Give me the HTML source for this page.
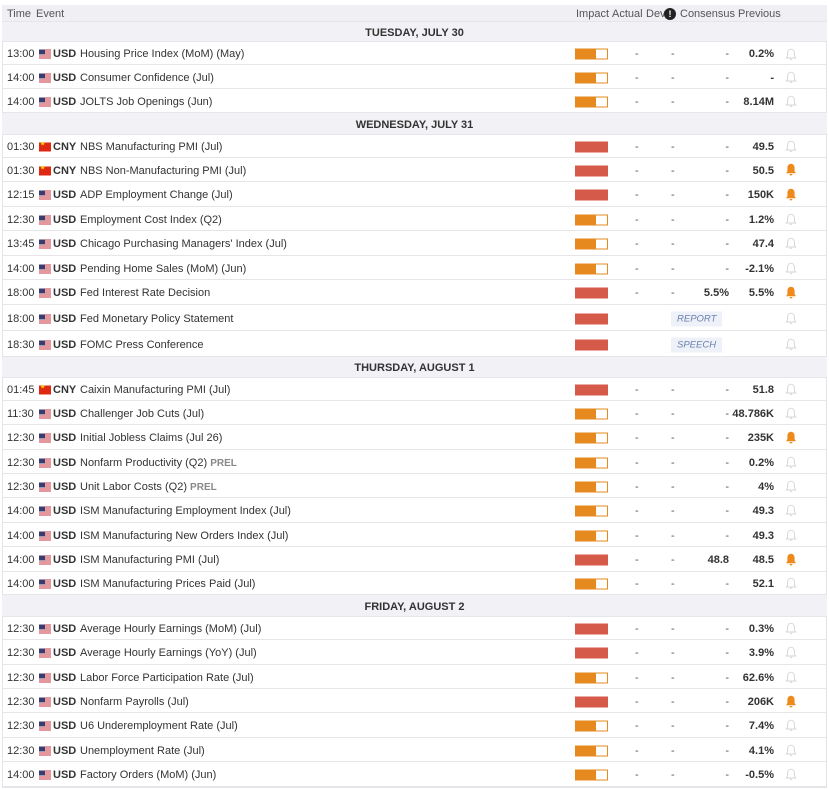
<!DOCTYPE html>
<html><head><meta charset="utf-8"><style>
*{margin:0;padding:0;box-sizing:border-box}
body{width:829px;height:789px;background:#fff;font-family:"Liberation Sans",Arial,sans-serif;font-size:11px;color:#333;position:relative;overflow:hidden}
.t{position:absolute;left:2px;top:5px;width:825px;height:783px;border:1px solid #e4e4e8;border-top:none}
.r{position:absolute;left:2px;width:825px;border-bottom:1px solid #e6e6ea;display:block}
.r>span{position:absolute;top:50%;transform:translateY(-50%);white-space:nowrap;margin-top:1px}
.h{background:#f0f0f4;color:#555}
.d{background:#f2f2f6;font-weight:bold;text-align:center;color:#333}
.d>span{left:0;right:0}
.tm{left:5px}
.fl{left:37px;width:12px;height:9px}
.cu{left:51px;font-weight:bold}
.ev{left:78px}
.im{left:573px;width:33px;height:11px}
.m{background:linear-gradient(to right,#e6891f 0 20px,#fff 20px);border:1px solid #e6891f}
.hi{background:#d65a4a}
.a{left:633px;color:#555}
.dv{left:669px;color:#555}
.c{right:98px;color:#555}
.c.v{font-weight:bold;color:#333}
.p{right:53px;font-weight:bold}
.b{left:783px;width:12px;height:13px}
.g{color:#888;font-weight:bold;font-size:10px}
.tag{left:669px;background:#eef2f8;color:#6a7fb0;font-style:italic;font-size:9.5px;padding:2px 6px}
.us{background:repeating-linear-gradient(#c8313e 0 1px,#fff 1px 2px)}
.us::before{content:"";position:absolute;left:0;top:0;width:6px;height:5px;background:#3c3b6e}
.cn{background:#de2910}
.cn::before{content:"★";position:absolute;left:1px;top:-2px;color:#ffde00;font-size:6px}
</style></head><body>
<div class="t"></div>
<svg width="0" height="0" style="position:absolute"><defs>
<symbol id="bo" viewBox="0 0 12 13"><path d="M6 1.2C3.8 1.2 2.6 3 2.6 5v3.2L1.3 10h9.4L9.4 8.2V5C9.4 3 8.2 1.2 6 1.2z" fill="none" stroke="#d4d4d8" stroke-width="0.9"/><path d="M4.8 11.3h2.4" stroke="#d4d4d8" stroke-width="0.9"/></symbol>
<symbol id="bf" viewBox="0 0 12 13"><path d="M6 0.8C3.7 0.8 2.4 2.7 2.4 5v3.2L1 10.2h10L9.6 8.2V5C9.6 2.7 8.3 0.8 6 0.8z" fill="#ee8a1c"/><rect x="4.6" y="11" width="2.8" height="1.4" rx=".7" fill="#ee8a1c"/></symbol>
</defs></svg>

<div class="r h" style="top:5px;height:17px"><span class="tm">Time</span><span style="left:34px">Event</span><span style="left:574px">Impact</span><span style="left:610px">Actual</span><span style="left:644px">Dev</span><span style="left:662px;width:12px;height:12px;border-radius:50%;background:#222;color:#fff;font-size:9px;font-weight:bold;text-align:center;line-height:12px">!</span><span style="left:678px">Consensus</span><span style="left:736px">Previous</span></div>

<div class="r d" style="top:22px;height:20px"><span>TUESDAY, JULY 30</span></div>
<div class="r" style="top:42px;height:23px"><span class="tm">13:00</span><span class="fl us"></span><span class="cu">USD</span><span class="ev">Housing Price Index (MoM) (May)</span><span class="im m"></span><span class="a">-</span><span class="dv">-</span><span class="c">-</span><span class="p">0.2%</span><svg class="b" style="position:absolute;top:6px"><use href="#bo"/></svg></div>
<div class="r" style="top:65px;height:24px"><span class="tm">14:00</span><span class="fl us"></span><span class="cu">USD</span><span class="ev">Consumer Confidence (Jul)</span><span class="im m"></span><span class="a">-</span><span class="dv">-</span><span class="c">-</span><span class="p">-</span><svg class="b" style="position:absolute;top:6px"><use href="#bo"/></svg></div>
<div class="r" style="top:89px;height:24px"><span class="tm">14:00</span><span class="fl us"></span><span class="cu">USD</span><span class="ev">JOLTS Job Openings (Jun)</span><span class="im m"></span><span class="a">-</span><span class="dv">-</span><span class="c">-</span><span class="p">8.14M</span><svg class="b" style="position:absolute;top:6px"><use href="#bo"/></svg></div>

<div class="r d" style="top:113px;height:22px"><span>WEDNESDAY, JULY 31</span></div>
<div class="r" style="top:135px;height:23px"><span class="tm">01:30</span><span class="fl cn"></span><span class="cu">CNY</span><span class="ev">NBS Manufacturing PMI (Jul)</span><span class="im hi"></span><span class="a">-</span><span class="dv">-</span><span class="c">-</span><span class="p">49.5</span><svg class="b" style="position:absolute;top:5px"><use href="#bo"/></svg></div>
<div class="r" style="top:158px;height:24px"><span class="tm">01:30</span><span class="fl cn"></span><span class="cu">CNY</span><span class="ev">NBS Non-Manufacturing PMI (Jul)</span><span class="im hi"></span><span class="a">-</span><span class="dv">-</span><span class="c">-</span><span class="p">50.5</span><svg class="b" style="position:absolute;top:5px"><use href="#bf"/></svg></div>
<div class="r" style="top:182px;height:25px"><span class="tm">12:15</span><span class="fl us"></span><span class="cu">USD</span><span class="ev">ADP Employment Change (Jul)</span><span class="im hi"></span><span class="a">-</span><span class="dv">-</span><span class="c">-</span><span class="p">150K</span><svg class="b" style="position:absolute;top:6px"><use href="#bf"/></svg></div>
<div class="r" style="top:207px;height:24px"><span class="tm">12:30</span><span class="fl us"></span><span class="cu">USD</span><span class="ev">Employment Cost Index (Q2)</span><span class="im m"></span><span class="a">-</span><span class="dv">-</span><span class="c">-</span><span class="p">1.2%</span><svg class="b" style="position:absolute;top:6px"><use href="#bo"/></svg></div>
<div class="r" style="top:231px;height:25px"><span class="tm">13:45</span><span class="fl us"></span><span class="cu">USD</span><span class="ev">Chicago Purchasing Managers' Index (Jul)</span><span class="im m"></span><span class="a">-</span><span class="dv">-</span><span class="c">-</span><span class="p">47.4</span><svg class="b" style="position:absolute;top:6px"><use href="#bo"/></svg></div>
<div class="r" style="top:256px;height:24px"><span class="tm">14:00</span><span class="fl us"></span><span class="cu">USD</span><span class="ev">Pending Home Sales (MoM) (Jun)</span><span class="im m"></span><span class="a">-</span><span class="dv">-</span><span class="c">-</span><span class="p">-2.1%</span><svg class="b" style="position:absolute;top:6px"><use href="#bo"/></svg></div>
<div class="r" style="top:280px;height:25px"><span class="tm">18:00</span><span class="fl us"></span><span class="cu">USD</span><span class="ev">Fed Interest Rate Decision</span><span class="im hi"></span><span class="a">-</span><span class="dv">-</span><span class="c v">5.5%</span><span class="p">5.5%</span><svg class="b" style="position:absolute;top:6px"><use href="#bf"/></svg></div>
<div class="r" style="top:305px;height:26px"><span class="tm">18:00</span><span class="fl us"></span><span class="cu">USD</span><span class="ev">Fed Monetary Policy Statement</span><span class="im hi"></span><span class="tag">REPORT</span><svg class="b" style="position:absolute;top:7px"><use href="#bo"/></svg></div>
<div class="r" style="top:331px;height:26px"><span class="tm">18:30</span><span class="fl us"></span><span class="cu">USD</span><span class="ev">FOMC Press Conference</span><span class="im hi"></span><span class="tag">SPEECH</span><svg class="b" style="position:absolute;top:7px"><use href="#bo"/></svg></div>

<div class="r d" style="top:357px;height:21px"><span>THURSDAY, AUGUST 1</span></div>
<div class="r" style="top:378px;height:23px"><span class="tm">01:45</span><span class="fl cn"></span><span class="cu">CNY</span><span class="ev">Caixin Manufacturing PMI (Jul)</span><span class="im hi"></span><span class="a">-</span><span class="dv">-</span><span class="c">-</span><span class="p">51.8</span><svg class="b" style="position:absolute;top:5px"><use href="#bo"/></svg></div>
<div class="r" style="top:401px;height:24px"><span class="tm">11:30</span><span class="fl us"></span><span class="cu">USD</span><span class="ev">Challenger Job Cuts (Jul)</span><span class="im m"></span><span class="a">-</span><span class="dv">-</span><span class="c">-</span><span class="p">48.786K</span><svg class="b" style="position:absolute;top:6px"><use href="#bo"/></svg></div>
<div class="r" style="top:425px;height:25px"><span class="tm">12:30</span><span class="fl us"></span><span class="cu">USD</span><span class="ev">Initial Jobless Claims (Jul 26)</span><span class="im m"></span><span class="a">-</span><span class="dv">-</span><span class="c">-</span><span class="p">235K</span><svg class="b" style="position:absolute;top:6px"><use href="#bf"/></svg></div>
<div class="r" style="top:450px;height:24px"><span class="tm">12:30</span><span class="fl us"></span><span class="cu">USD</span><span class="ev">Nonfarm Productivity (Q2) <b class="g">PREL</b></span><span class="im m"></span><span class="a">-</span><span class="dv">-</span><span class="c">-</span><span class="p">0.2%</span><svg class="b" style="position:absolute;top:6px"><use href="#bo"/></svg></div>
<div class="r" style="top:474px;height:24px"><span class="tm">12:30</span><span class="fl us"></span><span class="cu">USD</span><span class="ev">Unit Labor Costs (Q2) <b class="g">PREL</b></span><span class="im m"></span><span class="a">-</span><span class="dv">-</span><span class="c">-</span><span class="p">4%</span><svg class="b" style="position:absolute;top:6px"><use href="#bo"/></svg></div>
<div class="r" style="top:498px;height:25px"><span class="tm">14:00</span><span class="fl us"></span><span class="cu">USD</span><span class="ev">ISM Manufacturing Employment Index (Jul)</span><span class="im m"></span><span class="a">-</span><span class="dv">-</span><span class="c">-</span><span class="p">49.3</span><svg class="b" style="position:absolute;top:6px"><use href="#bo"/></svg></div>
<div class="r" style="top:523px;height:24px"><span class="tm">14:00</span><span class="fl us"></span><span class="cu">USD</span><span class="ev">ISM Manufacturing New Orders Index (Jul)</span><span class="im m"></span><span class="a">-</span><span class="dv">-</span><span class="c">-</span><span class="p">49.3</span><svg class="b" style="position:absolute;top:6px"><use href="#bo"/></svg></div>
<div class="r" style="top:547px;height:25px"><span class="tm">14:00</span><span class="fl us"></span><span class="cu">USD</span><span class="ev">ISM Manufacturing PMI (Jul)</span><span class="im hi"></span><span class="a">-</span><span class="dv">-</span><span class="c v">48.8</span><span class="p">48.5</span><svg class="b" style="position:absolute;top:6px"><use href="#bf"/></svg></div>
<div class="r" style="top:572px;height:23px"><span class="tm">14:00</span><span class="fl us"></span><span class="cu">USD</span><span class="ev">ISM Manufacturing Prices Paid (Jul)</span><span class="im m"></span><span class="a">-</span><span class="dv">-</span><span class="c">-</span><span class="p">52.1</span><svg class="b" style="position:absolute;top:5px"><use href="#bo"/></svg></div>

<div class="r d" style="top:595px;height:22px"><span>FRIDAY, AUGUST 2</span></div>
<div class="r" style="top:617px;height:23px"><span class="tm">12:30</span><span class="fl us"></span><span class="cu">USD</span><span class="ev">Average Hourly Earnings (MoM) (Jul)</span><span class="im hi"></span><span class="a">-</span><span class="dv">-</span><span class="c">-</span><span class="p">0.3%</span><svg class="b" style="position:absolute;top:5px"><use href="#bo"/></svg></div>
<div class="r" style="top:640px;height:25px"><span class="tm">12:30</span><span class="fl us"></span><span class="cu">USD</span><span class="ev">Average Hourly Earnings (YoY) (Jul)</span><span class="im hi"></span><span class="a">-</span><span class="dv">-</span><span class="c">-</span><span class="p">3.9%</span><svg class="b" style="position:absolute;top:6px"><use href="#bo"/></svg></div>
<div class="r" style="top:665px;height:24px"><span class="tm">12:30</span><span class="fl us"></span><span class="cu">USD</span><span class="ev">Labor Force Participation Rate (Jul)</span><span class="im m"></span><span class="a">-</span><span class="dv">-</span><span class="c">-</span><span class="p">62.6%</span><svg class="b" style="position:absolute;top:6px"><use href="#bo"/></svg></div>
<div class="r" style="top:689px;height:24px"><span class="tm">12:30</span><span class="fl us"></span><span class="cu">USD</span><span class="ev">Nonfarm Payrolls (Jul)</span><span class="im hi"></span><span class="a">-</span><span class="dv">-</span><span class="c">-</span><span class="p">206K</span><svg class="b" style="position:absolute;top:6px"><use href="#bf"/></svg></div>
<div class="r" style="top:713px;height:25px"><span class="tm">12:30</span><span class="fl us"></span><span class="cu">USD</span><span class="ev">U6 Underemployment Rate (Jul)</span><span class="im m"></span><span class="a">-</span><span class="dv">-</span><span class="c">-</span><span class="p">7.4%</span><svg class="b" style="position:absolute;top:6px"><use href="#bo"/></svg></div>
<div class="r" style="top:738px;height:24px"><span class="tm">12:30</span><span class="fl us"></span><span class="cu">USD</span><span class="ev">Unemployment Rate (Jul)</span><span class="im m"></span><span class="a">-</span><span class="dv">-</span><span class="c">-</span><span class="p">4.1%</span><svg class="b" style="position:absolute;top:6px"><use href="#bo"/></svg></div>
<div class="r" style="top:762px;height:25px"><span class="tm">14:00</span><span class="fl us"></span><span class="cu">USD</span><span class="ev">Factory Orders (MoM) (Jun)</span><span class="im m"></span><span class="a">-</span><span class="dv">-</span><span class="c">-</span><span class="p">-0.5%</span><svg class="b" style="position:absolute;top:6px"><use href="#bo"/></svg></div>
</body></html>
